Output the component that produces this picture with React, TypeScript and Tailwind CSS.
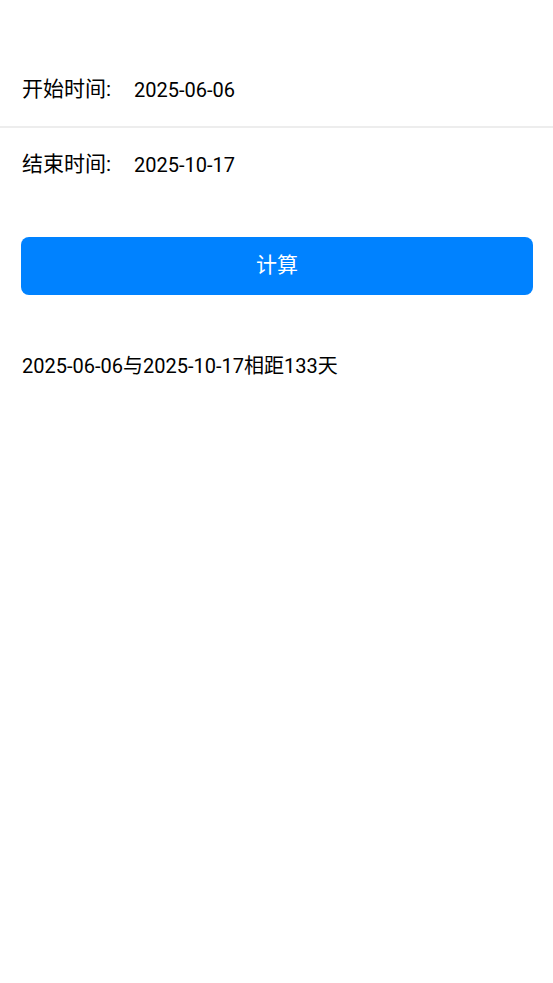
export default function App() {
  const font = { fontFamily: 'Roboto, "Noto Sans CJK SC", sans-serif' };
  return (
    <div className="min-h-screen bg-white text-black" style={font}>
      <div className="pt-[53px]">
        <div className="flex items-center h-[75px] px-[22px] border-b-2 border-[#ededed]">
          <span className="text-[21px] w-[112px]">开始时间:</span>
          <span className="text-[20px]">2025-06-06</span>
        </div>
        <div className="flex items-center h-[73px] px-[22px]">
          <span className="text-[21px] w-[112px]">结束时间:</span>
          <span className="text-[20px]">2025-10-17</span>
        </div>
      </div>
      <div className="pl-[21px] pr-[20px] pt-[36px]">
        <button className="w-full h-[58px] rounded-[8px] bg-[#0082ff] text-white text-[21px]">计算</button>
      </div>
      <div className="px-[22px] pt-[56px] text-[20px]">2025-06-06与2025-10-17相距133天</div>
    </div>
  );
}
